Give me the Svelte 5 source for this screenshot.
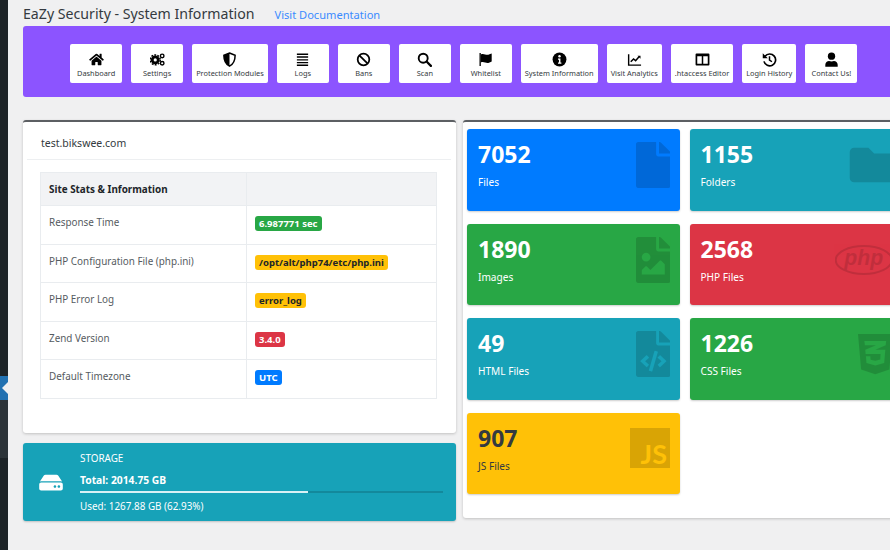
<script>
  const tools = [
    { label: 'Dashboard', icon: 'home' },
    { label: 'Settings', icon: 'cogs' },
    { label: 'Protection Modules', icon: 'shield' },
    { label: 'Logs', icon: 'bars' },
    { label: 'Bans', icon: 'ban' },
    { label: 'Scan', icon: 'search' },
    { label: 'Whitelist', icon: 'flag' },
    { label: 'System Information', icon: 'info' },
    { label: 'Visit Analytics', icon: 'chart' },
    { label: '.htaccess Editor', icon: 'columns' },
    { label: 'Login History', icon: 'history' },
    { label: 'Contact Us!', icon: 'user' }
  ];

  const stats = [
    { label: 'Response Time', value: '6.987771 sec', tone: 'green' },
    { label: 'PHP Configuration File (php.ini)', value: '/opt/alt/php74/etc/php.ini', tone: 'yellow' },
    { label: 'PHP Error Log', value: 'error_log', tone: 'yellow' },
    { label: 'Zend Version', value: '3.4.0', tone: 'red' },
    { label: 'Default Timezone', value: 'UTC', tone: 'blue' }
  ];

  const boxes = [
    { count: 7052, label: 'Files', tone: 'blue', icon: 'file' },
    { count: 1155, label: 'Folders', tone: 'teal', icon: 'folder' },
    { count: 1890, label: 'Images', tone: 'green', icon: 'image' },
    { count: 2568, label: 'PHP Files', tone: 'red', icon: 'php' },
    { count: 49, label: 'HTML Files', tone: 'teal', icon: 'code' },
    { count: 1226, label: 'CSS Files', tone: 'green', icon: 'css' },
    { count: 907, label: 'JS Files', tone: 'yellow', icon: 'js' }
  ];

  const usedPercent = 62.93;
</script>

<div class="page">
  <aside class="sidebar">
    <div class="side-top"></div>
    <div class="side-current"><span class="arrow"></span></div>
    <div class="side-sub"></div>
  </aside>

  <main class="content">
    <header class="title-row">
      <h1>EaZy Security - System Information</h1>
      <a href="#docs">Visit Documentation</a>
    </header>

    <nav class="toolbar">
      {#each tools as tool}
        <a class="tool" href="#tool">
          <svg class="tool-icon" viewBox="0 0 16 16" aria-hidden="true">
            {#if tool.icon === 'home'}
              <svg x="0" y="1" width="16" height="14" viewBox="0 0 576 512"><path d="M280.37 148.26L96 300.11V464a16 16 0 0 0 16 16l112.06-.29a16 16 0 0 0 15.92-16V368a16 16 0 0 1 16-16h64a16 16 0 0 1 16 16v95.64a16 16 0 0 0 16 16.05L464 480a16 16 0 0 0 16-16V300L295.67 148.26a12.19 12.19 0 0 0-15.3 0zM571.6 251.47L488 182.56V44.05a12 12 0 0 0-12-12h-56a12 12 0 0 0-12 12v72.61L318.47 43a48 48 0 0 0-61 0L4.34 251.47a12 12 0 0 0-1.6 16.9l25.5 31A12 12 0 0 0 45.15 301l235.22-193.74a12.19 12.19 0 0 1 15.3 0L530.9 301a12 12 0 0 0 16.9-1.6l25.5-31a12 12 0 0 0-1.7-16.93z"/></svg>
            {:else if tool.icon === 'cogs'}
              <circle cx="5.6" cy="8.4" r="3.2" fill="none" stroke="#000" stroke-width="3"/>
              <circle cx="5.6" cy="8.4" r="5.3" fill="none" stroke="#000" stroke-width="1.6" stroke-dasharray="2 1.33"/>
              <circle cx="13" cy="4.2" r="1.9" fill="none" stroke="#000" stroke-width="1.5"/>
              <circle cx="13" cy="12" r="1.9" fill="none" stroke="#000" stroke-width="1.5"/>
            {:else if tool.icon === 'shield'}
              <path d="M8 1l6 2.4c0 5.4-2 9.6-6 11.6-4-2-6-6.2-6-11.6z" fill="none" stroke="#000" stroke-width="1.6"/>
              <path d="M8 1v14c-4-2-6-6.2-6-11.6z"/>
            {:else if tool.icon === 'bars'}
              <path d="M2 1.6h12v1.5H2zM2 4.6h12v1.5H2zM2 7.6h12v1.5H2zM2 10.6h12v1.5H2zM2 13.4h12v1.5H2z"/>
            {:else if tool.icon === 'ban'}
              <circle cx="8" cy="8" r="6.2" fill="none" stroke="#000" stroke-width="1.9"/>
              <path d="M3.8 3.8l8.4 8.4" stroke="#000" stroke-width="1.9"/>
            {:else if tool.icon === 'search'}
              <circle cx="6.6" cy="6.6" r="4.8" fill="none" stroke="#000" stroke-width="2"/>
              <path d="M10.2 10.2l4.6 4.6" stroke="#000" stroke-width="2.4" stroke-linecap="round"/>
            {:else if tool.icon === 'flag'}
              <path d="M1.6 1h1.4v14H1.6z"/>
              <path d="M3 2.6c3-1.6 5 .8 8 .2 1.4-.3 2.6-.8 3.6-1.2v8.6c-1 .6-2.2 1.2-3.6 1.4-3 .4-5-1.8-8-.4z"/>
            {:else if tool.icon === 'info'}
              <circle cx="8" cy="8" r="7.4"/>
              <circle cx="8" cy="4.6" r="1.3" fill="#fff"/>
              <path d="M6.4 7h2.6v4.2h1V12.4H6.4v-1.2h1V8.2h-1z" fill="#fff"/>
            {:else if tool.icon === 'chart'}
              <path d="M1 2.4h1.5v10.8H15v1.5H1z"/>
              <path d="M4 10.4l3-3 2.2 1.8 3.6-4.2" fill="none" stroke="#000" stroke-width="1.6"/>
              <path d="M11.2 4h3.2v3.2z"/>
            {:else if tool.icon === 'columns'}
              <path fill-rule="evenodd" d="M1.6 1.6h12.8a1 1 0 0 1 1 1v10.8a1 1 0 0 1-1 1H1.6a1 1 0 0 1-1-1V2.6a1 1 0 0 1 1-1zM2.4 4.6v8h4.8v-8zM8.8 4.6v8h4.8v-8z"/>
            {:else if tool.icon === 'history'}
              <path d="M3.2 4.6A6.3 6.3 0 1 1 2.1 10" fill="none" stroke="#000" stroke-width="1.8"/>
              <path d="M.8 1.4l5.4 5.2H.8z"/>
              <path d="M8 4.6v4l2.6 1.8" fill="none" stroke="#000" stroke-width="1.6"/>
            {:else if tool.icon === 'user'}
              <circle cx="8" cy="4.4" r="3.9"/>
              <path d="M1.4 15.6v-2.1c0-2.6 2-4 4-4 .8 0 1.5.5 2.6.5s1.8-.5 2.6-.5c2 0 4 1.4 4 4v2.1z"/>
            {/if}
          </svg>
          <span>{tool.label}</span>
        </a>
      {/each}
    </nav>

    <div class="columns">
      <div class="left">
        <section class="panel site">
          <h2>test.bikswee.com</h2>
          <div class="table-wrap">
            <table>
              <thead>
                <tr><th>Site Stats &amp; Information</th><th></th></tr>
              </thead>
              <tbody>
                {#each stats as row}
                  <tr>
                    <td>{row.label}</td>
                    <td><span class="badge {row.tone}">{row.value}</span></td>
                  </tr>
                {/each}
              </tbody>
            </table>
          </div>
        </section>

        <section class="storage">
          <svg class="hdd" viewBox="0 0 576 512" aria-hidden="true"><path d="M576 304v96c0 26.51-21.49 48-48 48H48c-26.51 0-48-21.49-48-48v-96c0-26.51 21.49-48 48-48h480c26.51 0 48 21.49 48 48zm-48-80a79.557 79.557 0 0 1 30.777 6.165L462.25 85.374A48.003 48.003 0 0 0 422.311 64H153.689a48 48 0 0 0-39.938 21.374L17.223 230.165A79.557 79.557 0 0 1 48 224h480zm-48 96c-17.673 0-32 14.327-32 32s14.327 32 32 32 32-14.327 32-32-14.327-32-32-32zm-96 0c-17.673 0-32 14.327-32 32s14.327 32 32 32 32-14.327 32-32-14.327-32-32-32z"/></svg>
          <div class="storage-body">
            <div class="storage-title">STORAGE</div>
            <div class="storage-total">Total: 2014.75 GB</div>
            <div class="progress"><div class="progress-fill" style="width: {usedPercent}%"></div></div>
            <div class="storage-used">Used: 1267.88 GB ({usedPercent}%)</div>
          </div>
        </section>
      </div>

      <section class="panel right">
        <div class="boxes">
          {#each boxes as box}
            <div class="box {box.tone}">
              <div class="count">{box.count}</div>
              <div class="box-label">{box.label}</div>
              {#if box.icon === 'file'}
                <svg class="box-icon" style="width: 34.5px" viewBox="0 0 384 512"><path d="M224 136V0H24C10.7 0 0 10.7 0 24v464c0 13.3 10.7 24 24 24h336c13.3 0 24-10.7 24-24V160H248c-13.2 0-24-10.8-24-24zm160-14.1v6.1H256V0h6.1c6.4 0 12.5 2.5 17 7l97.9 98c4.5 4.5 7 10.6 7 16.9z"/></svg>
              {:else if box.icon === 'folder'}
                <svg class="box-icon folder" style="width: 51.5px" viewBox="0 0 512 512"><path d="M464 128H272l-64-64H48C21.49 64 0 85.49 0 112v288c0 26.51 21.49 48 48 48h416c26.51 0 48-21.49 48-48V176c0-26.51-21.49-48-48-48z"/></svg>
              {:else if box.icon === 'image'}
                <svg class="box-icon" style="width: 34.5px" viewBox="0 0 384 512"><path d="M384 121.941V128H256V0h6.059a24 24 0 0 1 16.97 7.029l97.941 97.941a24.002 24.002 0 0 1 7.03 16.971zM248 160c-13.2 0-24-10.8-24-24V0H24C10.745 0 0 10.745 0 24v464c0 13.255 10.745 24 24 24h336c13.255 0 24-10.745 24-24V160H248zm-135.455 16c26.51 0 48 21.49 48 48s-21.49 48-48 48-48-21.49-48-48 21.491-48 48-48zm208 240h-256l.485-48.485L104.545 328c4.686-4.686 11.799-4.201 16.485.485L160.545 368 264.06 264.485c4.686-4.686 12.284-4.686 16.97 0L320.545 304v112z"/></svg>
              {:else if box.icon === 'php'}
                <svg class="box-icon php" style="width: 57.5px" viewBox="0 0 640 512">
                  <ellipse cx="320" cy="256" rx="312" ry="156" fill="none" stroke="#000" stroke-width="22"/>
                  <text x="320" y="316" text-anchor="middle" font-size="236" font-weight="700" font-style="italic">php</text>
                </svg>
              {:else if box.icon === 'code'}
                <svg class="box-icon" style="width: 34.5px" viewBox="0 0 384 512"><path d="M384 121.941V128H256V0h6.059c6.365 0 12.47 2.529 16.971 7.029l97.941 97.941A24.005 24.005 0 0 1 384 121.941zM248 160c-13.2 0-24-10.8-24-24V0H24C10.745 0 0 10.745 0 24v464c0 13.255 10.745 24 24 24h336c13.255 0 24-10.745 24-24V160H248zM123.206 400.505a5.4 5.4 0 0 1-7.633.246l-64.866-60.812a5.4 5.4 0 0 1 0-7.879l64.866-60.812a5.4 5.4 0 0 1 7.633.246l19.579 20.885a5.4 5.4 0 0 1-.372 7.747L101.65 336l40.763 35.874a5.4 5.4 0 0 1 .372 7.747l-19.579 20.884zm51.295 50.479l-27.453-7.97a5.402 5.402 0 0 1-3.681-6.692l61.44-211.626a5.402 5.402 0 0 1 6.692-3.681l27.452 7.97a5.4 5.4 0 0 1 3.68 6.692l-61.44 211.626a5.397 5.397 0 0 1-6.69 3.681zm160.792-111.045l-64.866 60.812a5.4 5.4 0 0 1-7.633-.246l-19.58-20.885a5.4 5.4 0 0 1 .373-7.747L284.35 336l-40.763-35.874a5.4 5.4 0 0 1-.373-7.747l19.58-20.885a5.4 5.4 0 0 1 7.633-.246l64.866 60.812a5.4 5.4 0 0 1 0 7.879z"/></svg>
              {:else if box.icon === 'css'}
                <svg class="box-icon" style="width: 34.5px" viewBox="0 0 384 512"><path d="M0 32l34.9 395.8L192 480l157.1-52.2L384 32H0zm313.1 80l-4.8 47.3L193 208.6l-.3.1h111.5l-12.8 146.6-98.2 28.7-98.8-29.2-6.4-73.9h48.9l3.2 38.3 52.6 13.3 54.7-15.4 3.7-61.6-166.3-.5v-.1l-.2.1-3.6-46.3L193.1 162l6.5-2.7H76.7L70.9 112h242.2z"/></svg>
              {:else if box.icon === 'js'}
                <div class="js-icon">JS</div>
              {/if}
            </div>
          {/each}
        </div>
      </section>
    </div>
  </main>
</div>

<style>
  :global(body) {
    margin: 0;
    background: #f0f0f1;
    overflow: hidden;
  }

  .page {
    display: flex;
    width: 890px;
    height: 550px;
    overflow: hidden;
    font-family: "Noto Sans", "Open Sans", sans-serif;
    color: #343a40;
  }

  .sidebar {
    flex: 0 0 8px;
    display: flex;
    flex-direction: column;
    background: #1d2327;
  }
  .side-top {
    height: 376px;
  }
  .side-current {
    height: 24px;
    background: #2271b1;
    display: flex;
    align-items: center;
    justify-content: flex-end;
  }
  .arrow {
    width: 0;
    height: 0;
    border: 6px solid transparent;
    border-right-color: #f0f0f1;
    border-left-width: 0;
  }
  .side-sub {
    height: 58px;
    background: #2c3338;
  }

  .content {
    flex: 0 0 881px;
    margin-left: 15px;
  }

  .title-row {
    display: flex;
    align-items: baseline;
    gap: 20px;
    height: 26px;
    padding-top: 3px;
    box-sizing: border-box;
  }
  h1 {
    margin: 0;
    font-size: 14.15px;
    line-height: 21px;
    font-weight: 400;
  }
  .title-row a {
    color: #3b8bff;
    font-size: 11.1px;
    text-decoration: none;
  }

  .toolbar {
    display: flex;
    justify-content: center;
    gap: 9px;
    height: 71px;
    padding: 18px 2px 0 0;
    box-sizing: border-box;
    background: #8c54ff;
    border-radius: 3px;
  }
  .tool {
    display: flex;
    flex-direction: column;
    align-items: center;
    min-width: 52px;
    height: 39px;
    padding: 8px 4px 0;
    box-sizing: border-box;
    background: #fff;
    border-radius: 2px;
    color: #343a40;
    font-size: 7.4px;
    line-height: 11px;
    text-decoration: none;
    white-space: nowrap;
  }
  .tool-icon {
    width: 15px;
    height: 15px;
    margin-bottom: 1px;
  }

  .columns {
    display: flex;
    align-items: flex-start;
    gap: 7px;
    margin-top: 23px;
  }
  .left {
    flex: 0 0 433px;
    display: flex;
    flex-direction: column;
    gap: 10px;
  }

  .panel {
    background: #fff;
    border-top: 2px solid #5c5f63;
    border-radius: 3px;
    box-shadow: 0 1px 3px rgba(0, 0, 0, 0.2);
    box-sizing: border-box;
  }
  .site {
    height: 313px;
    padding: 0 5px 0 4px;
  }
  h2 {
    margin: 0;
    padding: 0 14px;
    height: 37px;
    line-height: 43px;
    font-size: 10.5px;
    font-weight: 400;
    border-bottom: 1px solid #edeff1;
  }
  .table-wrap {
    padding: 12px 14px 0 13px;
  }
  table {
    width: 100%;
    table-layout: fixed;
    border-collapse: collapse;
    font-size: 9.9px;
  }
  th, td {
    border: 1px solid #e9ecef;
    padding: 0 8px;
    text-align: left;
  }
  th:first-child, td:first-child {
    width: 189px;
  }
  th {
    height: 32px;
    background: #f2f3f5;
    color: #212529;
    font-weight: 700;
  }
  td {
    height: 38.5px;
    color: #555b61;
    vertical-align: top;
    padding-top: 9px;
    box-sizing: border-box;
    line-height: 14px;
  }
  .badge {
    display: inline-block;
    padding: 0 4px;
    margin-top: 1px;
    border-radius: 3px;
    font-weight: 700;
    font-size: 9.5px;
    line-height: 15px;
  }
  .badge.green { background: #28a745; color: #fff; }
  .badge.yellow { background: #ffc107; color: #212529; }
  .badge.red { background: #dc3545; color: #fff; }
  .badge.blue { background: #007bff; color: #fff; }

  .storage {
    display: flex;
    align-items: center;
    height: 78px;
    padding: 0 13px 0 16px;
    box-sizing: border-box;
    background: #17a2b8;
    border-radius: 3px;
    box-shadow: 0 1px 2px rgba(0, 0, 0, 0.2);
    color: #fff;
    font-size: 9.9px;
  }
  .hdd {
    flex: 0 0 24px;
    height: 21px;
    fill: #fff;
    margin-right: 17px;
  }
  .storage-body {
    flex: 1;
  }
  .storage-title {
    line-height: 14px;
  }
  .storage-total {
    margin-top: 8px;
    line-height: 14px;
    font-size: 10.3px;
    font-weight: 700;
  }
  .progress {
    height: 2px;
    margin: 4px 0 6px;
    background: rgba(0, 0, 0, 0.15);
  }
  .progress-fill {
    height: 100%;
    background: #d9f1f5;
  }
  .storage-used {
    line-height: 14px;
  }

  .right {
    flex: 0 0 443px;
    height: 398px;
    padding: 7px 4px 0;
  }
  .boxes {
    display: grid;
    grid-template-columns: 213px 213px;
    grid-auto-rows: 81.6px;
    gap: 13px 9.5px;
  }
  .box {
    position: relative;
    padding: 11px;
    box-sizing: border-box;
    border-radius: 3px;
    box-shadow: 0 1px 2px rgba(0, 0, 0, 0.2);
    color: #fff;
    overflow: hidden;
  }
  .box.blue { background: #007bff; }
  .box.teal { background: #17a2b8; }
  .box.green { background: #28a745; }
  .box.red { background: #dc3545; }
  .box.yellow { background: #ffc107; color: #343a40; }
  .count {
    font-size: 23px;
    line-height: 28px;
    font-weight: 700;
  }
  .box-label {
    margin-top: 7px;
    font-size: 10.1px;
    line-height: 14px;
  }
  .box-icon {
    position: absolute;
    top: 13px;
    right: 10px;
    height: 46px;
    fill: #000;
    opacity: 0.15;
  }
  .box-icon.folder {
    right: 4px;
  }
  .box-icon.php {
    opacity: 0.12;
  }
  .box-icon.php text {
    font-family: "Liberation Sans", sans-serif;
  }
  .js-icon {
    position: absolute;
    top: 15px;
    right: 10px;
    width: 40px;
    height: 40px;
    box-sizing: border-box;
    padding: 13px 3px 0 0;
    background: rgba(0, 0, 0, 0.15);
    color: #ffc107;
    font-family: Lato, sans-serif;
    font-size: 27px;
    line-height: 26px;
    font-weight: 700;
    text-align: right;
  }
</style>
